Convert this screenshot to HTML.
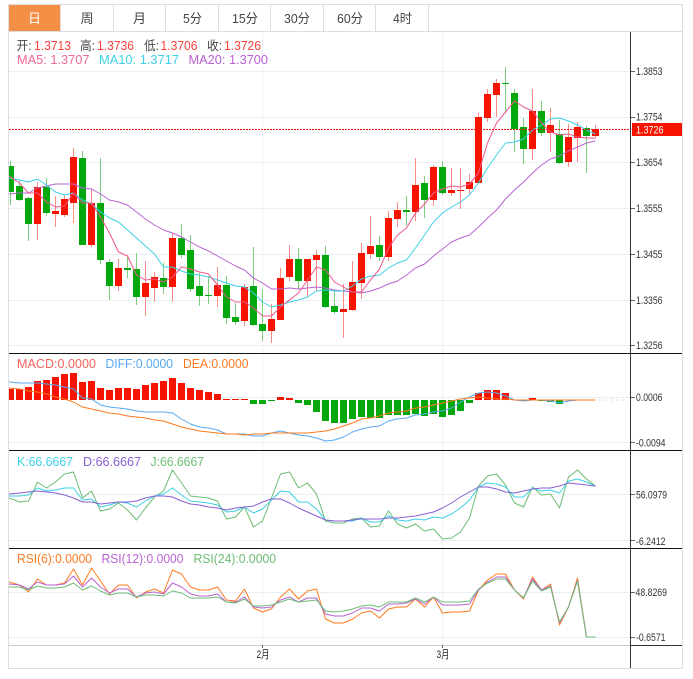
<!DOCTYPE html>
<html lang="zh">
<head>
<meta charset="utf-8">
<title>K线图</title>
<style>
html,body{margin:0;padding:0;background:#fff;width:693px;height:679px;overflow:hidden}
svg{display:block;position:absolute;left:0;top:0}
text{font-family:"Liberation Sans","Noto Sans CJK SC",sans-serif}
.t{font-size:13px;fill:#444}
.a{font-size:11px;fill:#333}
.l{font-size:12.5px}
.m{fill:none;stroke-width:1;stroke-linejoin:round}
</style>
</head>
<body>
<svg width="693" height="679" viewBox="0 0 693 679" xmlns="http://www.w3.org/2000/svg">
<defs><clipPath id="c"><rect x="9" y="32" width="622" height="636"/></clipPath></defs>
<rect width="693" height="679" fill="#fff"/>

<!-- tabs -->
<rect x="9" y="5" width="51" height="26" fill="#f58f45"/>
<path d="M60.5 5V31M113.5 5V31M165.5 5V31M218.5 5V31M270.5 5V31M323.5 5V31M375.5 5V31M428.5 5V31M9 31.5H682" stroke="#ddd" fill="none"/>
<text x="34.5" y="23" text-anchor="middle" class="t" style="fill:#fff">日</text>
<text x="87" y="23" text-anchor="middle" class="t">周</text>
<text x="139.5" y="23" text-anchor="middle" class="t">月</text>
<text x="183" y="23" class="t" textLength="19" lengthAdjust="spacingAndGlyphs">5分</text>
<text x="232" y="23" class="t" textLength="26" lengthAdjust="spacingAndGlyphs">15分</text>
<text x="284" y="23" class="t" textLength="26" lengthAdjust="spacingAndGlyphs">30分</text>
<text x="337" y="23" class="t" textLength="26" lengthAdjust="spacingAndGlyphs">60分</text>
<text x="393" y="23" class="t" textLength="19" lengthAdjust="spacingAndGlyphs">4时</text>

<!-- grid -->
<path d="M9 71.5H631M9 117.5H631M9 162.5H631M9 208.5H631M9 254.5H631M9 300.5H631M9 345.5H631M9 397.5H631M9 442.5H631M9 494.5H631M9 540.5H631M9 592.5H631M9 637.5H631" stroke="#e9f0f4" fill="none"/>
<path d="M262.5 32V648M442.5 32V648" stroke="#eef4f6" fill="none"/>

<g clip-path="url(#c)">
<!-- wicks -->
<path fill="none" stroke="#f98a84" d="M37.5 182V240M55.5 196V227M64.5 195V217M73.5 148V223M91.5 189V247M118.5 259V291M145.5 261V316M154.5 272V302M172.5 233V302M217.5 267V307M244.5 284V326M271.5 304V343M280.5 268V320M289.5 245V281M307.5 259V297M316.5 250V291M343.5 284V338M352.5 261V311M361.5 243V299M370.5 216V259M388.5 211V261M397.5 202V227M415.5 158V221M433.5 165V206M451.5 168V196M460.5 168V209M469.5 174V194M478.5 113V184M487.5 89V122M496.5 79V117M532.5 89V160M550.5 108V152M568.5 124V167M577.5 122V162M595.5 125V138"/>
<path fill="none" stroke="#7ccf7c" d="M10.5 161V205M19.5 180V201M28.5 197V241M46.5 178V216M82.5 151V245M100.5 158V264M109.5 259V300M127.5 257V278M136.5 253V305M163.5 263V294M181.5 224V258M190.5 235V292M199.5 273V306M208.5 276V304M226.5 276V324M235.5 303V325M253.5 247V326M262.5 289V341M298.5 248V290M325.5 246V308M334.5 290V314M379.5 236V261M406.5 196V226M424.5 176V218M442.5 161V195M505.5 67V113M514.5 89V152M523.5 118V164M541.5 101V136M559.5 120V164M586.5 126V173"/>
<!-- bodies -->
<path fill="#f61400" d="M34 187h7v37h-7zM52 211h7v3h-7zM61 199h7v16h-7zM70 157h7v46h-7zM88 203h7v42h-7zM115 268h7v18h-7zM142 283h7v14h-7zM151 277h7v11h-7zM169 238h7v49h-7zM214 285h7v11h-7zM241 287h7v34h-7zM268 319h7v12h-7zM277 278h7v42h-7zM286 259h7v18h-7zM304 259h7v22h-7zM313 255h7v5h-7zM340 309h7v3h-7zM349 282h7v28h-7zM358 253h7v30h-7zM367 246h7v8h-7zM385 218h7v39h-7zM394 210h7v9h-7zM412 185h7v27h-7zM430 167h7v33h-7zM448 190h7v3h-7zM457 190h7v1h-7zM466 182h7v7h-7zM475 117h7v66h-7zM484 94h7v24h-7zM493 83h7v12h-7zM529 111h7v38h-7zM547 125h7v8h-7zM565 137h7v25h-7zM574 127h7v11h-7zM592 129h7v7h-7z"/>
<path fill="#00a80c" d="M9 166h5v26h-5zM16 186h7v14h-7zM25 198h7v26h-7zM43 187h7v26h-7zM79 158h7v87h-7zM97 203h7v57h-7zM106 262h7v24h-7zM124 268h7v2h-7zM133 269h7v28h-7zM160 278h7v9h-7zM178 238h7v17h-7zM187 250h7v39h-7zM196 286h7v10h-7zM205 295h7v1h-7zM223 285h7v33h-7zM232 317h7v5h-7zM250 286h7v39h-7zM259 324h7v7h-7zM295 259h7v22h-7zM322 255h7v52h-7zM331 306h7v6h-7zM376 245h7v12h-7zM403 210h7v2h-7zM421 183h7v17h-7zM439 167h7v26h-7zM502 83h7v1h-7zM511 93h7v36h-7zM520 127h7v22h-7zM538 111h7v22h-7zM556 134h7v29h-7zM583 128h7v8h-7z"/>

<!-- MA20 -->
<polyline class="m" stroke="#b962d2" points="9,194 19.5,193 28.5,193 37.5,188 46.5,186 55.5,184 64.5,184 73.5,184 82.5,188 91.5,189 100.5,194 109.5,200 118.5,202 127.5,205 136.5,212 145.5,219 154.5,225 163.5,230 172.5,233 181.5,237 190.5,242 199.5,247 208.5,251 217.5,256 226.5,261 235.5,266 244.5,270 253.5,278 262.5,283 271.5,289 280.5,289 289.5,288 298.5,289 307.5,288 316.5,287 325.5,288 334.5,290 343.5,291 352.5,292 361.5,293 370.5,291 379.5,288 388.5,284 397.5,281 406.5,275 415.5,268 424.5,264 433.5,256 442.5,249 451.5,242 460.5,238 469.5,235 478.5,227 487.5,218 496.5,210 505.5,199 514.5,190 523.5,182 532.5,173 541.5,165 550.5,159 559.5,156 568.5,151 577.5,147 586.5,143 595.5,141"/>
<!-- MA10 -->
<polyline class="m" stroke="#3dd0e6" points="9,178 19.5,180 28.5,182 37.5,179 46.5,185 55.5,192 64.5,195 73.5,193 82.5,200 91.5,204 100.5,212 109.5,218 118.5,222 127.5,230 136.5,238 145.5,246 154.5,254 163.5,267 172.5,267 181.5,271 190.5,274 199.5,275 208.5,277 217.5,280 226.5,283 235.5,286 244.5,287 253.5,293 262.5,302 271.5,307 280.5,305 289.5,302 298.5,300 307.5,297 316.5,291 325.5,290 334.5,291 343.5,291 352.5,286 361.5,279 370.5,276 379.5,275 388.5,268 397.5,263 406.5,260 415.5,248 424.5,235 433.5,222 442.5,213 451.5,207 460.5,202 469.5,195 478.5,183 487.5,168 496.5,155 505.5,143 514.5,142 523.5,139 532.5,130 541.5,125 550.5,119 559.5,118 568.5,121 577.5,125 586.5,130 595.5,134"/>
<!-- MA5 -->
<polyline class="m" stroke="#f0568f" points="9,176 19.5,183 28.5,193 37.5,193 46.5,202 55.5,207 64.5,206 73.5,193 82.5,203 91.5,203 100.5,217 109.5,233 118.5,252 127.5,256 136.5,275 145.5,280 154.5,279 163.5,282 172.5,277 181.5,267 190.5,269 199.5,272 208.5,274 217.5,285 226.5,297 235.5,302 244.5,302 253.5,308 262.5,316 271.5,316 280.5,307 289.5,300 298.5,293 307.5,280 316.5,267 325.5,270 334.5,282 343.5,287 352.5,292 361.5,292 370.5,280 379.5,269 388.5,248 397.5,235 406.5,228 415.5,213 424.5,204 433.5,193 442.5,189 451.5,186 460.5,187 469.5,184 478.5,173 487.5,143 496.5,123 505.5,112 514.5,101 523.5,107 532.5,111 541.5,123 550.5,132 559.5,135 568.5,134 577.5,137 586.5,138 595.5,138"/>

<!-- MACD bars -->
<path fill="#f61400" d="M9 389h5v11h-5zM16 389h7v11h-7zM25 387h7v13h-7zM34 381h7v19h-7zM43 380h7v20h-7zM52 377h7v23h-7zM61 374h7v26h-7zM70 373h7v27h-7zM79 382h7v18h-7zM88 381h7v19h-7zM97 388h7v12h-7zM106 390h7v10h-7zM115 388h7v12h-7zM124 388h7v12h-7zM133 389h7v11h-7zM142 385h7v15h-7zM151 383h7v17h-7zM160 381h7v19h-7zM169 378h7v22h-7zM178 383h7v17h-7zM187 388h7v12h-7zM196 390h7v10h-7zM205 392h7v8h-7zM214 394h7v6h-7zM223 399h7v1h-7zM232 399h7v1h-7zM241 399h7v1h-7zM277 397h7v3h-7zM286 398h7v2h-7zM475 393h7v7h-7zM484 390h7v10h-7zM493 390h7v10h-7zM502 393h7v7h-7zM529 398h7v2h-7z"/>
<path fill="#00a80c" d="M250 400h7v4h-7zM259 400h7v4h-7zM268 400h7v1h-7zM295 400h7v3h-7zM304 400h7v5h-7zM313 400h7v12h-7zM322 400h7v21h-7zM331 400h7v23h-7zM340 400h7v23h-7zM349 400h7v19h-7zM358 400h7v17h-7zM367 400h7v18h-7zM376 400h7v18h-7zM385 400h7v15h-7zM394 400h7v15h-7zM403 400h7v15h-7zM412 400h7v14h-7zM421 400h7v16h-7zM430 400h7v14h-7zM439 400h7v17h-7zM448 400h7v15h-7zM457 400h7v11h-7zM466 400h7v3h-7zM520 400h7v1h-7zM538 400h7v1h-7zM547 400h7v2h-7zM556 400h7v4h-7z"/>
<path d="M598 400H628" stroke="#cfe6f2" stroke-dasharray="3 3" fill="none"/>
<!-- DIFF -->
<polyline class="m" stroke="#58a8f0" points="9,382 19.5,383 28.5,383 37.5,383 46.5,384 55.5,385 64.5,387 73.5,389 82.5,398 91.5,399 100.5,405 109.5,407 118.5,408 127.5,409 136.5,411 145.5,412 154.5,412 163.5,412 172.5,413 181.5,419 190.5,424 199.5,427 208.5,428 217.5,430 226.5,434 235.5,434 244.5,434 253.5,436 262.5,436 271.5,433 280.5,431 289.5,433 298.5,435 307.5,436 316.5,438 325.5,441 334.5,440 343.5,437 352.5,432 361.5,429 370.5,427 379.5,426 388.5,421 397.5,419 406.5,418 415.5,415 424.5,414 433.5,412 442.5,411 451.5,408 460.5,402 469.5,397 478.5,393 487.5,392 496.5,393 505.5,396 514.5,400 523.5,401 532.5,400 541.5,400 550.5,401 559.5,403 568.5,401 577.5,400 586.5,400 595.5,400"/>
<!-- DEA -->
<polyline class="m" stroke="#ff7a1e" points="9,388 19.5,389 28.5,391 37.5,392 46.5,394 55.5,397 64.5,399 73.5,402 82.5,407 91.5,409 100.5,411 109.5,413 118.5,414 127.5,416 136.5,417 145.5,418 154.5,420 163.5,421 172.5,424 181.5,427 190.5,429 199.5,431 208.5,432 217.5,433 226.5,434 235.5,434 244.5,435 253.5,434 262.5,434 271.5,433 280.5,433 289.5,433 298.5,433 307.5,433 316.5,432 325.5,431 334.5,429 343.5,426 352.5,423 361.5,419 370.5,418 379.5,416 388.5,413 397.5,412 406.5,411 415.5,408 424.5,407 433.5,405 442.5,403 451.5,401 460.5,399 469.5,398 478.5,397 487.5,398 496.5,399 505.5,399 514.5,400 523.5,400 532.5,400 541.5,400 550.5,400 559.5,400 568.5,400 577.5,400 586.5,400 595.5,400"/>

<!-- KDJ -->
<polyline class="m" stroke="#6cbd74" points="9,498 19.5,502 28.5,501 37.5,482 46.5,488 55.5,482 64.5,474 73.5,472 82.5,498 91.5,491 100.5,511 109.5,509 118.5,503 127.5,510 136.5,520 145.5,508 154.5,497 163.5,491 172.5,470 181.5,483 190.5,496 199.5,497 208.5,498 217.5,501 226.5,519 235.5,517 244.5,507 253.5,527 262.5,521 271.5,498 280.5,474 289.5,472 298.5,488 307.5,483 316.5,494 325.5,521 334.5,523 343.5,523 352.5,519 361.5,518 370.5,527 379.5,526 388.5,511 397.5,524 406.5,528 415.5,524 424.5,531 433.5,529 442.5,539 451.5,538 460.5,532 469.5,518 478.5,486 487.5,476 496.5,474 505.5,485 514.5,503 523.5,507 532.5,487 541.5,495 550.5,494 559.5,508 568.5,477 577.5,470 586.5,479 595.5,486"/>
<polyline class="m" stroke="#3dd0e6" points="9,496 19.5,496 28.5,495 37.5,488 46.5,491 55.5,490 64.5,488 73.5,488 82.5,500 91.5,499 100.5,507 109.5,505 118.5,502 127.5,503 136.5,507 145.5,501 154.5,496 163.5,494 172.5,488 181.5,495 190.5,501 199.5,502 208.5,503 217.5,505 226.5,512 235.5,511 244.5,507 253.5,513 262.5,509 271.5,500 280.5,491 289.5,492 298.5,502 307.5,502 316.5,509 325.5,520 334.5,521 343.5,521 352.5,521 361.5,518 370.5,522 379.5,522 388.5,516 397.5,520 406.5,521 415.5,519 424.5,520 433.5,517 442.5,518 451.5,514 460.5,508 469.5,500 478.5,487 487.5,483 496.5,484 505.5,487 514.5,497 523.5,497 532.5,488 541.5,491 550.5,490 559.5,493 568.5,481 577.5,479 586.5,482 595.5,486"/>
<polyline class="m" stroke="#8a5fd2" points="9,494 19.5,493 28.5,492 37.5,491 46.5,492 55.5,493 64.5,495 73.5,498 82.5,502 91.5,502 100.5,504 109.5,503 118.5,502 127.5,502 136.5,501 145.5,498 154.5,496 163.5,496 172.5,497 181.5,501 190.5,504 199.5,505 208.5,507 217.5,508 226.5,510 235.5,508 244.5,507 253.5,506 262.5,502 271.5,499 280.5,499 289.5,503 298.5,508 307.5,512 316.5,516 325.5,520 334.5,521 343.5,521 352.5,520 361.5,519 370.5,519 379.5,519 388.5,518 397.5,518 406.5,517 415.5,516 424.5,514 433.5,512 442.5,508 451.5,503 460.5,497 469.5,492 478.5,487 487.5,487 496.5,489 505.5,492 514.5,493 523.5,491 532.5,489 541.5,488 550.5,488 559.5,486 568.5,483 577.5,484 586.5,485 595.5,486"/>

<!-- RSI -->
<polyline class="m" stroke="#ff7a1e" points="9,582 19.5,585 28.5,592 37.5,579 46.5,585 55.5,585 64.5,583 73.5,569 82.5,585 91.5,568 100.5,581 109.5,594 118.5,585 127.5,585 136.5,598 145.5,592 154.5,589 163.5,593 172.5,570 181.5,574 190.5,587 199.5,590 208.5,590 217.5,587 226.5,600 235.5,601 244.5,589 253.5,608 262.5,612 271.5,609 280.5,597 289.5,589 298.5,599 307.5,591 316.5,589 325.5,619 334.5,623 343.5,623 352.5,619 361.5,613 370.5,611 379.5,618 388.5,609 397.5,607 406.5,607 415.5,599 424.5,607 433.5,597 442.5,613 451.5,612 460.5,612 469.5,611 478.5,590 487.5,580 496.5,574 505.5,574 514.5,590 523.5,599 532.5,577 541.5,590 550.5,584 559.5,625 568.5,607 577.5,578 586.5,637 595.5,637"/>
<polyline class="m" stroke="#b962d2" points="9,584 19.5,585 28.5,589 37.5,582 46.5,585 55.5,585 64.5,584 73.5,576 82.5,587 91.5,578 100.5,587 109.5,593 118.5,589 127.5,589 136.5,597 145.5,593 154.5,592 163.5,594 172.5,583 181.5,587 190.5,594 199.5,596 208.5,596 217.5,594 226.5,602 235.5,602 244.5,597 253.5,607 262.5,608 271.5,607 280.5,600 289.5,597 298.5,602 307.5,598 316.5,598 325.5,614 334.5,616 343.5,616 352.5,613 361.5,608 370.5,608 379.5,611 388.5,604 397.5,604 406.5,603 415.5,599 424.5,604 433.5,597 442.5,605 451.5,605 460.5,605 469.5,604 478.5,590 487.5,582 496.5,577 505.5,577 514.5,590 523.5,598 532.5,579 541.5,590 550.5,586 559.5,623 568.5,607 577.5,580 586.5,637 595.5,637"/>
<polyline class="m" stroke="#6cbd74" points="9,587 19.5,587 28.5,590 37.5,586 46.5,588 55.5,588 64.5,587 73.5,583 82.5,590 91.5,586 100.5,591 109.5,595 118.5,593 127.5,593 136.5,597 145.5,595 154.5,595 163.5,596 172.5,591 181.5,593 190.5,598 199.5,598 208.5,598 217.5,597 226.5,602 235.5,603 244.5,599 253.5,606 262.5,606 271.5,605 280.5,602 289.5,599 298.5,602 307.5,601 316.5,600 325.5,611 334.5,612 343.5,611 352.5,609 361.5,606 370.5,605 379.5,607 388.5,602 397.5,602 406.5,602 415.5,598 424.5,602 433.5,597 442.5,602 451.5,602 460.5,602 469.5,601 478.5,589 487.5,583 496.5,579 505.5,579 514.5,590 523.5,598 532.5,581 541.5,591 550.5,587 559.5,622 568.5,607 577.5,581 586.5,637 595.5,637"/>
</g>

<!-- dotted current price line -->
<path d="M9 129.5H631" stroke="#f01010" stroke-dasharray="2 1" fill="none"/>

<!-- separators -->
<path d="M9 353.5H682M9 450.5H682M9 548.5H682" stroke="#111" fill="none"/>
<path d="M9 645.5H631" stroke="#ccc" fill="none"/>
<path d="M631 645.5H682" stroke="#333" fill="none"/>
<!-- outer border -->
<path d="M8.5 4V668.5H682.5V4.5H8" stroke="#ddd" fill="none"/>
<path d="M630.5 32V668" stroke="#333" fill="none"/>
<!-- axis ticks -->
<path d="M631 71.5h4M631 117.5h4M631 162.5h4M631 208.5h4M631 254.5h4M631 300.5h4M631 345.5h4M631 397.5h4M631 442.5h4M631 494.5h4M631 540.5h4M631 592.5h4M631 637.5h4M262.5 645v3M442.5 645v3" stroke="#666" fill="none"/>

<!-- axis labels -->
<text x="636" y="75" class="a" textLength="26.5" lengthAdjust="spacingAndGlyphs">1.3853</text>
<text x="636" y="120.5" class="a" textLength="26.5" lengthAdjust="spacingAndGlyphs">1.3754</text>
<text x="636" y="166" class="a" textLength="26.5" lengthAdjust="spacingAndGlyphs">1.3654</text>
<text x="636" y="212" class="a" textLength="26.5" lengthAdjust="spacingAndGlyphs">1.3555</text>
<text x="636" y="258" class="a" textLength="26.5" lengthAdjust="spacingAndGlyphs">1.3455</text>
<text x="636" y="304" class="a" textLength="26.5" lengthAdjust="spacingAndGlyphs">1.3356</text>
<text x="636" y="349" class="a" textLength="26.5" lengthAdjust="spacingAndGlyphs">1.3256</text>
<rect x="632" y="123" width="50" height="13" fill="#f61400"/>
<text x="636" y="133.5" class="a" style="fill:#fff" textLength="27.5" lengthAdjust="spacingAndGlyphs">1.3726</text>
<text x="636" y="401" class="a" textLength="26.5" lengthAdjust="spacingAndGlyphs">0.0006</text>
<text x="636" y="446.5" class="a" textLength="29.5" lengthAdjust="spacingAndGlyphs">-0.0094</text>
<text x="636" y="498.5" class="a" textLength="31" lengthAdjust="spacingAndGlyphs">56.0979</text>
<text x="636" y="545" class="a" textLength="29.5" lengthAdjust="spacingAndGlyphs">-6.2412</text>
<text x="635.5" y="596" class="a" textLength="31.5" lengthAdjust="spacingAndGlyphs">48.8269</text>
<text x="636" y="641" class="a" textLength="29.5" lengthAdjust="spacingAndGlyphs">-0.6571</text>
<text x="256.5" y="658" class="a" style="fill:#222" textLength="13" lengthAdjust="spacingAndGlyphs">2月</text>
<text x="436.5" y="658" class="a" style="fill:#222" textLength="13" lengthAdjust="spacingAndGlyphs">3月</text>

<!-- price legend -->
<g class="l" style="font-size:12.5px">
<text x="16.5" y="50" fill="#444" textLength="15" lengthAdjust="spacingAndGlyphs">开:</text>
<text x="34" y="50" fill="#f6413a" textLength="37" lengthAdjust="spacingAndGlyphs">1.3713</text>
<text x="80" y="50" fill="#444" textLength="15" lengthAdjust="spacingAndGlyphs">高:</text>
<text x="97" y="50" fill="#f6413a" textLength="37" lengthAdjust="spacingAndGlyphs">1.3736</text>
<text x="144" y="50" fill="#444" textLength="15" lengthAdjust="spacingAndGlyphs">低:</text>
<text x="160.5" y="50" fill="#f6413a" textLength="37" lengthAdjust="spacingAndGlyphs">1.3706</text>
<text x="207" y="50" fill="#444" textLength="15" lengthAdjust="spacingAndGlyphs">收:</text>
<text x="224" y="50" fill="#f6413a" textLength="37" lengthAdjust="spacingAndGlyphs">1.3726</text>
<text x="17" y="64" fill="#f0689c" textLength="72.5" lengthAdjust="spacingAndGlyphs">MA5: 1.3707</text>
<text x="99" y="64" fill="#3dd0e6" textLength="80" lengthAdjust="spacingAndGlyphs">MA10: 1.3717</text>
<text x="188.5" y="64" fill="#b962d2" textLength="79.5" lengthAdjust="spacingAndGlyphs">MA20: 1.3700</text>
<!-- MACD legend -->
<text x="17" y="368" fill="#f4625c" textLength="79" lengthAdjust="spacingAndGlyphs">MACD:0.0000</text>
<text x="105.5" y="368" fill="#58a8f0" textLength="67.5" lengthAdjust="spacingAndGlyphs">DIFF:0.0000</text>
<text x="183" y="368" fill="#ff7a1e" textLength="65.5" lengthAdjust="spacingAndGlyphs">DEA:0.0000</text>
<!-- KDJ legend -->
<text x="17" y="466" fill="#3dd0e6" textLength="56" lengthAdjust="spacingAndGlyphs">K:66.6667</text>
<text x="83" y="466" fill="#8a5fd2" textLength="58" lengthAdjust="spacingAndGlyphs">D:66.6667</text>
<text x="150.5" y="466" fill="#6cbd74" textLength="53.5" lengthAdjust="spacingAndGlyphs">J:66.6667</text>
<!-- RSI legend -->
<text x="17" y="563" fill="#ff7a1e" textLength="75" lengthAdjust="spacingAndGlyphs">RSI(6):0.0000</text>
<text x="101.5" y="563" fill="#b962d2" textLength="82" lengthAdjust="spacingAndGlyphs">RSI(12):0.0000</text>
<text x="193.5" y="563" fill="#6cbd74" textLength="82.5" lengthAdjust="spacingAndGlyphs">RSI(24):0.0000</text>
</g>
</svg>
</body>
</html>
